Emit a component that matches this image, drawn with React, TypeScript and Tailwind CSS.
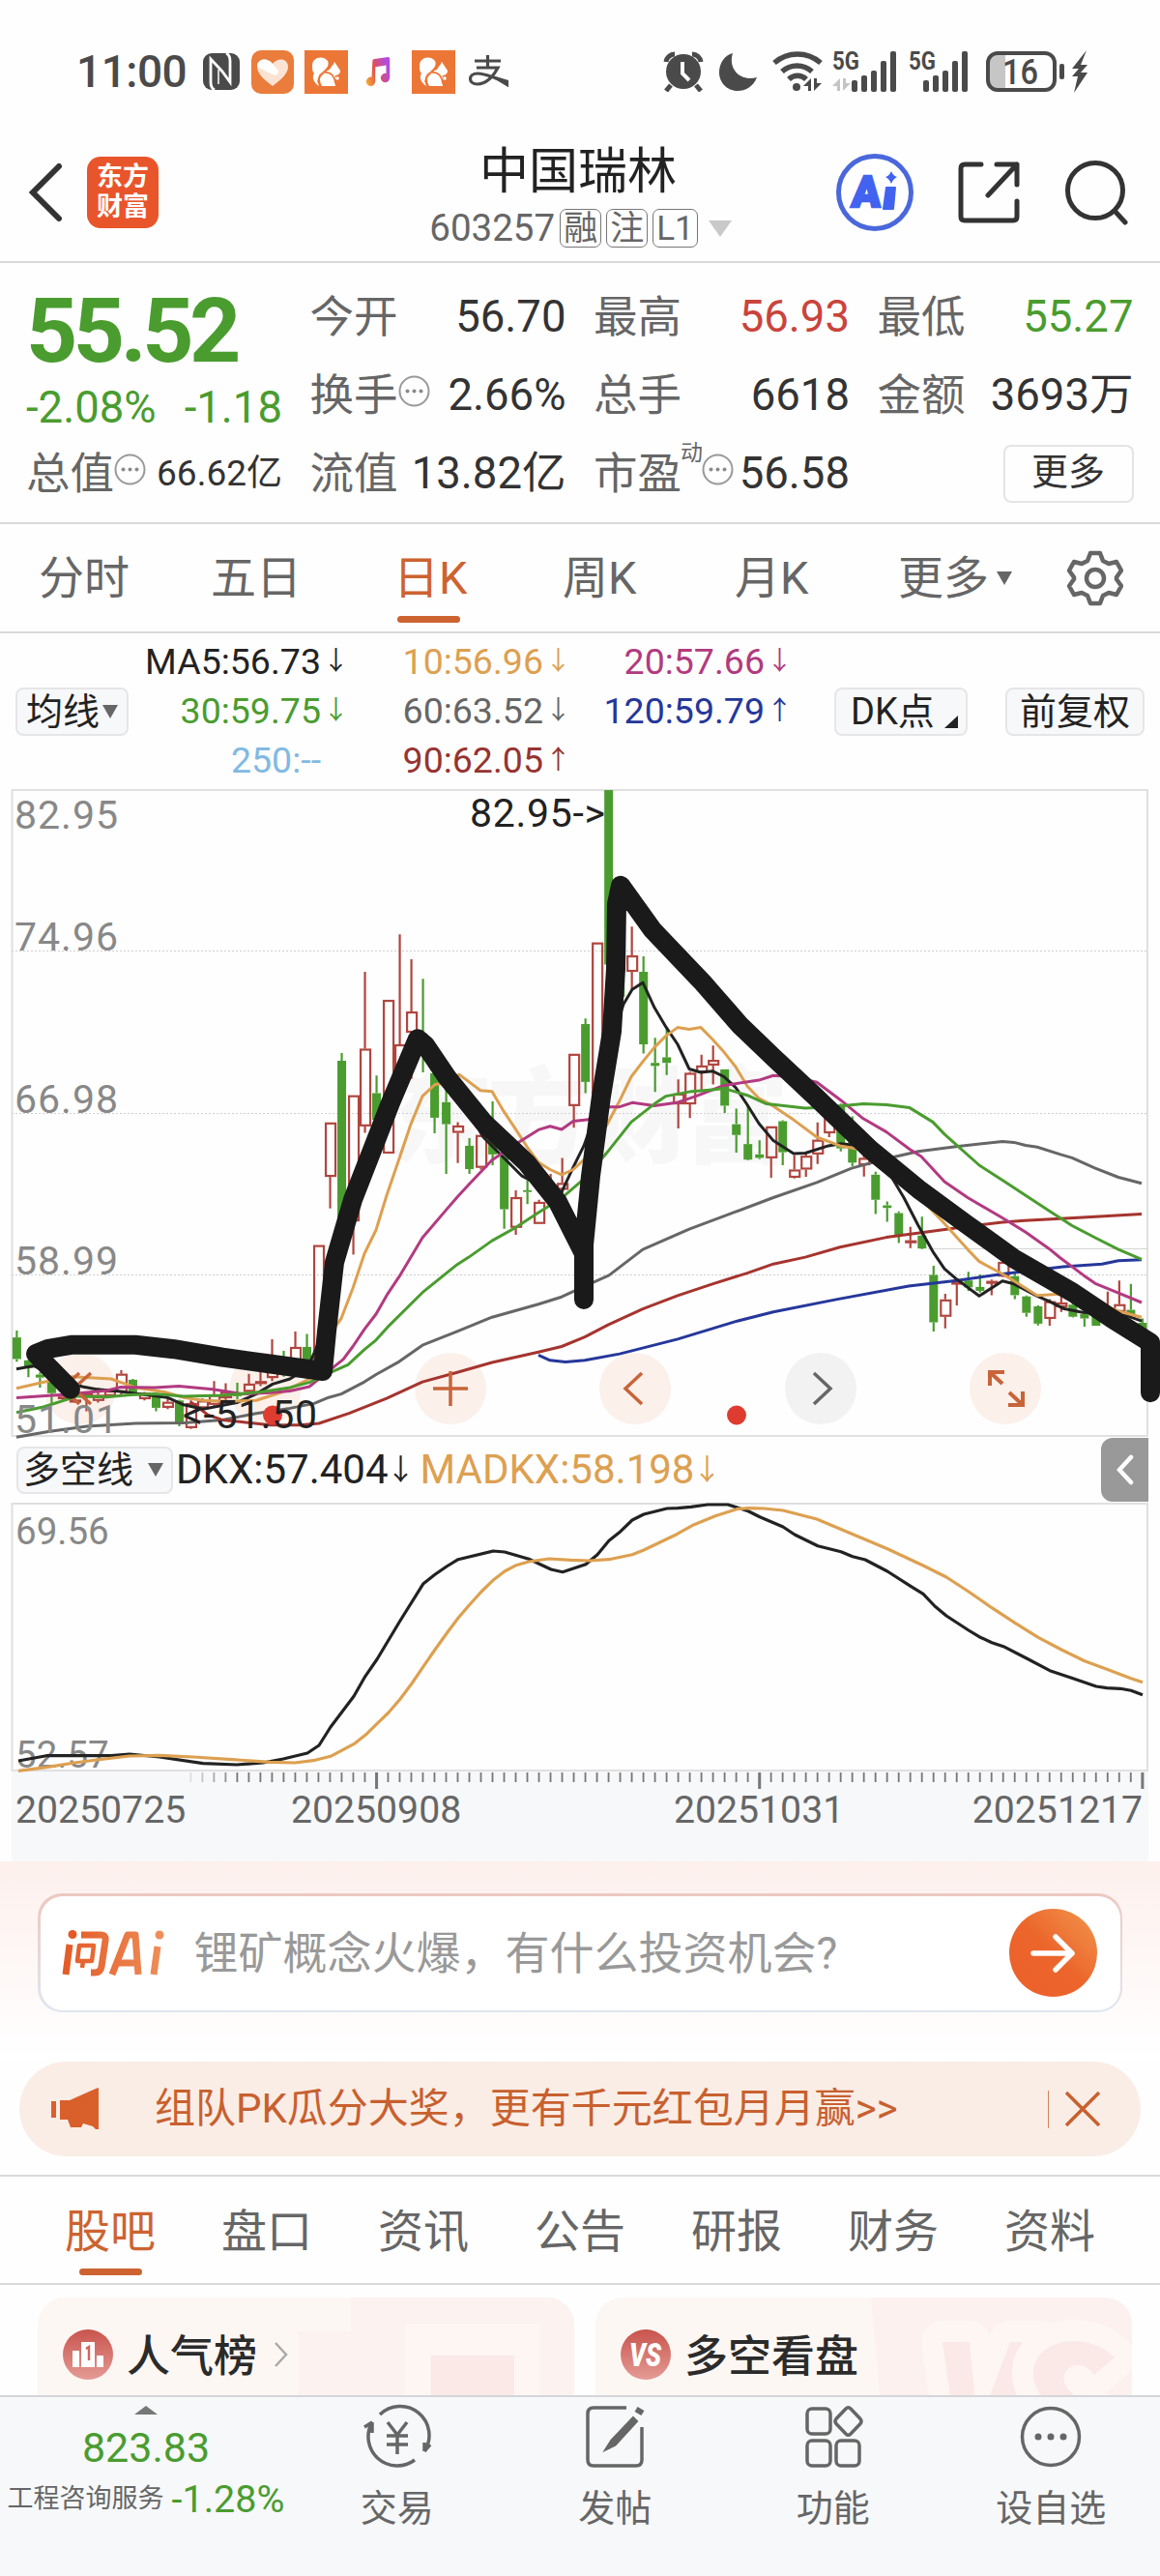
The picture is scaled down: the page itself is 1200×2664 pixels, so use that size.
import type { ReactNode } from 'react'

type Candle = [kind: 'up' | 'down', high: number, top: number, bottom: number, low: number]
type Point = [x: number, y: number]

const GREEN = '#4a9c2f'
const RED = '#b0463f'
const ORANGE = '#dda050'

// one entry per trading day, 12px apart
const candles: Candle[] = [
  ['down', 1288, 1304, 1354, 1360], ['down', 1355, 1357, 1375, 1396], ['down', 1385, 1390, 1397, 1420],
  ['down', 1400, 1405, 1433, 1457], ['up', 1430, 1437, 1447, 1450], ['up', 1445, 1448, 1452, 1455],
  ['up', 1430, 1432, 1440, 1475], ['up', 1420, 1437, 1451, 1455], ['up', 1425, 1427, 1440, 1442],
  ['up', 1380, 1388, 1431, 1436], ['down', 1400, 1402, 1431, 1431], ['up', 1430, 1432, 1447, 1450],
  ['down', 1437, 1438, 1467, 1475], ['up', 1445, 1453, 1467, 1470], ['down', 1448, 1450, 1502, 1510],
  ['up', 1450, 1456, 1514, 1516], ['up', 1445, 1450, 1468, 1470], ['up', 1405, 1437, 1460, 1465],
  ['up', 1410, 1430, 1445, 1455], ['down', 1409, 1435, 1440, 1447], ['up', 1388, 1411, 1430, 1435],
  ['up', 1375, 1405, 1412, 1417], ['up', 1308, 1370, 1398, 1405], ['down', 1335, 1380, 1390, 1395],
  ['up', 1290, 1326, 1360, 1370], ['down', 1296, 1326, 1360, 1370], ['up', 1090, 1090, 1370, 1380],
  ['up', 806, 806, 932, 1005], ['down', 645, 663, 1040, 1060], ['up', 743, 743, 1035, 1112],
  ['up', 457, 635, 815, 830], ['down', 697, 738, 800, 850], ['up', 522, 522, 878, 878],
  ['up', 370, 625, 690, 700], ['up', 428, 549, 598, 705], ['down', 473, 600, 650, 690],
  ['down', 690, 692, 795, 831], ['down', 730, 759, 810, 925], ['up', 805, 813, 830, 900],
  ['down', 842, 860, 914, 925], ['up', 835, 835, 911, 915], ['down', 757, 840, 880, 905],
  ['down', 825, 885, 1007, 1052], ['up', 963, 979, 1050, 1066], ['down', 940, 963, 967, 995],
  ['up', 985, 990, 1041, 1041], ['up', 925, 950, 962, 965], ['up', 888, 946, 962, 970],
  ['up', 647, 647, 768, 818], ['down', 565, 578, 712, 738], ['up', 389, 389, 740, 760],
  ['down', 36, 36, 440, 700], ['down', 473, 475, 515, 520], ['up', 352, 419, 457, 497],
  ['down', 421, 457, 625, 646], ['down', 610, 668, 675, 735], ['down', 588, 655, 668, 696],
  ['up', 706, 739, 764, 820], ['up', 688, 691, 764, 796], ['up', 649, 674, 690, 735],
  ['up', 628, 661, 674, 718], ['down', 683, 683, 767, 784], ['down', 774, 810, 835, 876],
  ['down', 765, 856, 892, 894], ['down', 847, 880, 888, 891], ['up', 815, 815, 889, 934],
  ['down', 801, 803, 875, 905], ['up', 882, 915, 934, 936], ['up', 878, 883, 915, 932],
  ['up', 806, 846, 880, 902], ['up', 780, 790, 831, 840], ['down', 762, 765, 866, 873],
  ['down', 792, 850, 899, 907], ['up', 875, 888, 905, 931], ['down', 920, 927, 985, 1018],
  ['down', 989, 998, 1004, 1036], ['down', 1012, 1016, 1068, 1085], ['up', 1048, 1079, 1084, 1097],
  ['down', 1024, 1068, 1098, 1100], ['down', 1138, 1159, 1269, 1290], ['up', 1203, 1216, 1256, 1283],
  ['up', 1175, 1175, 1181, 1230], ['down', 1152, 1172, 1188, 1196], ['down', 1158, 1187, 1196, 1200],
  ['up', 1170, 1173, 1178, 1206], ['up', 1125, 1129, 1163, 1165], ['down', 1155, 1162, 1206, 1215],
  ['down', 1207, 1209, 1247, 1256], ['down', 1230, 1232, 1272, 1276], ['up', 1215, 1220, 1261, 1277],
  ['up', 1205, 1223, 1234, 1245], ['down', 1220, 1228, 1256, 1258], ['down', 1240, 1250, 1260, 1279],
  ['down', 1245, 1255, 1277, 1277], ['up', 1198, 1245, 1265, 1268], ['up', 1172, 1227, 1245, 1250],
  ['down', 1180, 1240, 1250, 1260], ['down', 1260, 1270, 1290, 1290],
]

const averages: { color: string; points: Point[] }[] = [
  {
    color: '#666666',
    points: [[17, 1535], [50, 1522], [90, 1510], [140, 1503], [190, 1502], [230, 1495], [265, 1480], [300, 1468], [325, 1457], [340, 1443], [353, 1435], [377, 1407], [389, 1390], [413, 1360], [437, 1322], [473, 1290], [509, 1257], [557, 1227], [581, 1210], [600, 1190], [630, 1160], [665, 1100], [713, 1053], [761, 1013], [800, 980], [845, 945], [881, 912], [917, 890], [950, 873], [989, 862], [1037, 850], [1049, 852], [1061, 859], [1073, 863], [1097, 880], [1109, 888], [1133, 912], [1157, 933], [1181, 947]],
  },
  {
    color: '#a5342f',
    points: [[197, 1453], [215, 1483], [230, 1495], [250, 1500], [280, 1507], [310, 1507], [330, 1503], [361, 1480], [400, 1445], [437, 1407], [473, 1385], [509, 1362], [557, 1338], [581, 1325], [605, 1303], [629, 1275], [665, 1238], [701, 1207], [737, 1180], [773, 1155], [800, 1134], [833, 1118], [869, 1095], [917, 1072], [957, 1060], [1000, 1047], [1037, 1037], [1060, 1033], [1120, 1026], [1181, 1018]],
  },
  {
    color: '#25379b',
    points: [[557, 1345], [569, 1357], [585, 1361], [605, 1357], [641, 1342], [701, 1308], [761, 1267], [800, 1245], [865, 1216], [940, 1185], [990, 1172], [1037, 1157], [1100, 1140], [1140, 1134], [1157, 1126], [1181, 1124]],
  },
  {
    color: '#222222',
    points: [[17, 1377], [35, 1370], [60, 1395], [85, 1418], [100, 1424], [120, 1428], [173, 1443], [190, 1460], [210, 1470], [245, 1455], [265, 1435], [282, 1412], [300, 1400], [318, 1375], [327, 1330], [340, 1250], [352, 1120], [380, 920], [400, 780], [420, 640], [437, 610], [460, 690], [500, 840], [540, 930], [570, 965], [580, 972], [593, 910], [604, 860], [620, 760], [635, 600], [645, 532], [654, 498], [665, 482], [677, 540], [689, 585], [701, 625], [713, 682], [725, 690], [737, 687], [749, 700], [761, 725], [773, 765], [785, 808], [800, 848], [821, 878], [833, 877], [857, 860], [870, 855], [890, 860], [915, 905], [935, 980], [950, 1045], [965, 1105], [977, 1145], [989, 1168], [1013, 1208], [1037, 1173], [1049, 1180], [1073, 1208], [1085, 1220], [1100, 1237], [1120, 1246], [1140, 1248], [1165, 1253], [1181, 1266]],
  },
  {
    color: ORANGE,
    points: [[17, 1422], [50, 1405], [75, 1395], [115, 1400], [140, 1420], [170, 1430], [190, 1443], [210, 1450], [240, 1452], [265, 1450], [290, 1432], [320, 1400], [340, 1300], [353, 1260], [365, 1190], [377, 1110], [389, 1055], [400, 975], [413, 890], [425, 810], [437, 745], [450, 718], [462, 715], [475, 695], [483, 708], [497, 732], [509, 734], [521, 780], [533, 820], [545, 862], [557, 898], [569, 915], [581, 927], [593, 915], [605, 890], [627, 815], [640, 760], [653, 700], [665, 665], [677, 632], [689, 605], [701, 586], [713, 590], [725, 586], [737, 613], [749, 643], [761, 677], [773, 722], [785, 750], [800, 768], [821, 800], [845, 840], [869, 860], [889, 868], [930, 930], [977, 1040], [989, 1070], [1001, 1100], [1013, 1128], [1037, 1157], [1049, 1173], [1073, 1207], [1100, 1203], [1130, 1220], [1160, 1245], [1181, 1257]],
  },
  {
    color: '#b23a80',
    points: [[17, 1444], [70, 1436], [110, 1427], [125, 1419], [160, 1420], [185, 1417], [220, 1424], [250, 1435], [280, 1432], [300, 1428], [320, 1418], [345, 1373], [355, 1355], [365, 1325], [377, 1285], [389, 1250], [401, 1203], [413, 1163], [437, 1073], [461, 1010], [473, 979], [485, 950], [509, 893], [533, 857], [557, 823], [569, 815], [581, 822], [593, 803], [607, 800], [620, 790], [630, 770], [641, 770], [654, 760], [677, 767], [700, 760], [720, 745], [749, 720], [785, 708], [800, 697], [820, 700], [845, 713], [869, 753], [893, 797], [917, 828], [941, 868], [953, 885], [977, 943], [1001, 980], [1037, 1027], [1061, 1060], [1085, 1098], [1097, 1120], [1121, 1160], [1133, 1179], [1157, 1201], [1181, 1223]],
  },
  {
    color: GREEN,
    points: [[17, 1478], [45, 1465], [80, 1440], [110, 1442], [135, 1437], [160, 1435], [190, 1440], [230, 1438], [270, 1430], [300, 1420], [320, 1408], [343, 1384], [360, 1367], [377, 1332], [389, 1310], [401, 1280], [437, 1200], [473, 1135], [485, 1118], [509, 1080], [533, 1050], [557, 1015], [580, 983], [605, 935], [630, 870], [653, 805], [677, 763], [689, 745], [713, 735], [737, 730], [749, 727], [773, 743], [793, 763], [833, 773], [860, 770], [893, 763], [917, 765], [941, 772], [965, 805], [977, 833], [989, 857], [1013, 905], [1037, 940], [1061, 975], [1085, 1010], [1109, 1045], [1133, 1073], [1157, 1100], [1181, 1123]],
  },
]

// hand drawn marker over the K line
const marker: Point[] = [
  [73, 1424], [37, 1342], [50, 1330], [75, 1321], [140, 1321], [180, 1331], [230, 1350], [334, 1382], [338, 1290], [346, 1130],
  [365, 985], [385, 870], [404, 760], [432, 612], [440, 627], [463, 703], [500, 805], [545, 900], [577, 990], [604, 1110],
  [604, 1216], [604, 1090], [611, 930], [622, 745], [633, 595], [637, 450], [638, 300], [642, 257], [675, 360],
  [727, 482], [766, 582], [800, 655], [843, 745], [900, 868], [950, 960], [1000, 1042], [1050, 1123], [1110, 1200],
  [1150, 1260], [1190, 1316], [1190, 1432],
]

const dkx: Point[] = [[19, 1020], [48, 1004], [115, 1004], [134, 999], [165, 1008], [210, 1028], [245, 1032], [272, 1026], [293, 1014], [318, 996], [330, 972], [342, 915], [366, 820], [378, 757], [390, 705], [402, 645], [414, 585], [438, 470], [450, 442], [462, 417], [474, 395], [510, 369], [522, 372], [547, 394], [570, 426], [582, 434], [600, 416], [606, 410], [618, 380], [630, 337], [642, 308], [654, 273], [666, 255], [690, 237], [701, 236], [715, 232], [732, 225], [753, 225], [774, 245], [786, 263], [810, 294], [822, 318], [846, 353], [870, 371], [882, 386], [895, 396], [918, 432], [942, 478], [955, 502], [967, 540], [979, 570], [1002, 615], [1013, 635], [1026, 653], [1038, 665], [1062, 702], [1086, 740], [1110, 764], [1134, 789], [1145, 794], [1159, 796], [1170, 802], [1182, 815]]
const madkx: Point[] = [[19, 1051], [48, 1040], [77, 1026], [100, 1017], [134, 1005], [165, 1003], [200, 1008], [240, 1016], [280, 1024], [305, 1026], [326, 1018], [342, 1006], [366, 968], [378, 940], [390, 905], [402, 870], [414, 828], [426, 780], [438, 727], [450, 675], [462, 625], [474, 577], [486, 535], [498, 495], [510, 460], [522, 432], [534, 413], [547, 402], [568, 393], [590, 397], [610, 399], [630, 395], [654, 380], [666, 366], [700, 317], [718, 287], [740, 260], [762, 239], [775, 236], [790, 237], [810, 243], [845, 270], [918, 362], [955, 414], [979, 450], [1002, 495], [1026, 545], [1050, 592], [1074, 637], [1098, 675], [1122, 710], [1145, 736], [1170, 764], [1182, 776]]

const ky = (v: number) => v / 2.24 - 15
const dy = (v: number) => v / 3 - 73
const line = (pts: Point[], fn: (v: number) => number) => pts.map(([x, y]) => `${x},${fn(y).toFixed(1)}`).join(' ')

function Squirrel({ className }: { className: string }) {
  return (
    <svg className={className} width="45" height="45" viewBox="0 0 45 45">
      <rect width="45" height="45" fill="#ec7635" />
      <path d="M8 16C8 7 19 5 24 11c2 4-1 8-5 11-4 2-7 8-4 15-5-3-8-9-5-13-2-2-2-5-2-8z" fill="#fff" />
      <path d="M20 25c6-3 8-9 11-13l6 9c0 4-3 5-6 5-3-2-7-3-11-1z" fill="#fff" />
      <path d="M16 30a8 8 0 1 1 15 2l1 5H18q-2-3-2-7z" fill="#fff" />
      <path d="M14 33C15 24 22 23 30 13" stroke="#ec7635" strokeWidth="1.800" fill="none" />
      <path d="M21 23q9-1 11 11" stroke="#ec7635" strokeWidth="1.600" fill="none" />
      <circle cx="34" cy="29" r="1.800" fill="#fff" />
    </svg>
  )
}

function Signal({ label, roaming }: { label: string; roaming?: boolean }) {
  return (
    <svg className="overflow-visible" width="68" height="44" viewBox="0 0 68 44" fill="#4a4a4a">
      <text x="0" y="20" fontSize="26" fontWeight="700" textLength="28" lengthAdjust="spacingAndGlyphs">{label}</text>
      {roaming && <path d="M8 42V29l-8 8h5v5zM11 29v13l8-8h-5v-5z" fill="#c4c4c4" />}
      {[31, 26, 21, 11, 1].map((y, i) => (
        <rect key={y} x={(roaming ? 20 : 15) + i * 10} y={y} width="6" height={43 - y} rx="2" />
      ))}
    </svg>
  )
}

function StatusBar() {
  return (
    <div className="h-[134px] pt-[14px] pl-[79px] pr-[74px] flex items-center text-[#4a4a4a]">
      <span className="w-[131px] text-[46px] font-medium tracking-[-0.5px]">11:00</span>
      <svg width="38" height="38" viewBox="0 0 38 38">
        <rect width="38" height="38" rx="9" fill="#4a4a4a" />
        <path d="M12 38q-4-2-4-8V6l12 13 8 11V8q0-6-4-8" stroke="#fff" strokeWidth="2.800" fill="none" />
        <path d="M16 17v15" stroke="#fff" strokeWidth="1.500" fill="none" />
      </svg>
      <svg className="ml-[12px]" width="44" height="45" viewBox="0 0 44 45">
        <rect width="44" height="45" rx="10" fill="#ea7c3c" />
        <path d="M22 37C11 29 6 23 6 17c0-9 11-10 16-3 5-7 16-6 16 3 0 6-5 12-16 20z" fill="#fbe3d3" />
        <path d="M6 17c0-9 11-10 16-3l5 6c3 4-2 7-5 5z" fill="#fff" />
      </svg>
      <Squirrel className="ml-[11px]" />
      <svg className="ml-[18px]" width="27" height="30" viewBox="0 0 27 32">
        <defs>
          <linearGradient id="note" x1="0" y1="1" x2="1" y2="0.6">
            <stop offset="0" stopColor="#f5b331" />
            <stop offset="0.5" stopColor="#e3514e" />
            <stop offset="1" stopColor="#b34be0" />
          </linearGradient>
        </defs>
        <path d="M7 4q0-2 2-2l15-2q2 0 2 2v21a5 5 0 1 1-4-5V9L10 11v16a5 5 0 1 1-4-5z" fill="url(#note)" />
      </svg>
      <Squirrel className="ml-[21px]" />
      <svg className="ml-[14px]" width="41" height="34" viewBox="0 0 41 34" fill="none" stroke="#4a4a4a" strokeWidth="3.200">
        <path d="M6 6h27M19.500 0v12M8 13h22c-5 10-13 17-21 17-10 0-10-11 0-11 8 0 16 4 24 7" />
        <path d="M24 22l17 5v5z" fill="#4a4a4a" strokeWidth="2" />
      </svg>
      <div className="ml-auto flex items-center">
        <svg width="42" height="42" viewBox="0 0 42 42">
          <circle cx="21" cy="21" r="18" fill="#4a4a4a" />
          <path d="M3 11a9 9 0 0 1 9-8M39 11a9 9 0 0 0-9-8M8 35l-5 6M34 35l5 6" stroke="#4a4a4a" strokeWidth="5" fill="none" />
          <path d="M20 11v12l7 7" stroke="#fff" strokeWidth="4" fill="none" />
        </svg>
        <svg className="ml-[16px]" width="40" height="40" viewBox="0 0 40 40">
          <path d="M14 1C9 15 20 31 39 26 35 36 27 40 19 40 8 40 0 31 0 21 0 11 6 3 14 1z" fill="#4a4a4a" />
        </svg>
        <svg className="ml-[15px]" width="52" height="42" viewBox="0 0 52 42" fill="none" stroke="#4a4a4a" strokeWidth="5.500">
          <path d="M2 12C16 0 36 0 50 12M10 21c9-8 22-8 31 0M17 29c5-5 13-5 18 0" />
          <circle cx="25" cy="37" r="4" fill="#4a4a4a" stroke="none" />
          <path d="M40 41V28l-8 8h5v5zM43 28v13l8-8h-5v-5z" fill="#4a4a4a" stroke="none" />
        </svg>
        <div className="ml-[10px] flex gap-[11px]">
          <Signal label="5G" roaming />
          <Signal label="5G" />
        </div>
        <svg className="ml-[12px] overflow-visible" width="83" height="42" viewBox="0 0 83 42">
          <path d="M3 12q0-10 10-10h7v38h-7Q3 40 3 30z" fill="#c6c6c6" />
          <rect x="2" y="2" width="69" height="38" rx="10" fill="none" stroke="#4a4a4a" strokeWidth="4" />
          <rect x="76" y="13" width="5" height="16" rx="2" fill="#4a4a4a" />
          <text x="17" y="34" fontSize="36" fontWeight="500" fill="#4a4a4a" textLength="37" lengthAdjust="spacingAndGlyphs">16</text>
        </svg>
        <svg className="ml-[6px]" width="17" height="44" viewBox="0 0 17 44">
          <path d="M15 0L0 19h7L0 27h6L2 44l14-21H9l7-8H9z" fill="#4a4a4a" />
        </svg>
      </div>
    </div>
  )
}

function Tag({ children }: { children: ReactNode }) {
  return <span className="h-[40px] min-w-[41px] px-[3px] flex items-center justify-center rounded-[7px] border border-[#777] text-[35px] leading-none">{children}</span>
}

function Header() {
  return (
    <header className="h-[138px] flex border-b-2 border-[#d9d9d9]">
      <div className="w-[400px] pl-[29px] pt-[28px] flex">
        <svg className="mt-[7px]" width="36" height="60" viewBox="0 0 36 60" fill="none" stroke="#333" strokeWidth="6">
          <path d="M32 3L5 30l27 27" strokeLinecap="round" />
        </svg>
        <div className="ml-[25px] w-[74px] h-[74px] rounded-[14px] bg-[#e9552b] text-white font-bold text-[27px] leading-[31px] text-center pt-[6px]">
          东方<br />财富
        </div>
      </div>
      <div className="w-[396px] flex flex-col items-center">
        <h1 className="mt-[18px] text-[51px] leading-none text-[#222]">中国瑞林</h1>
        <div className="mt-[13px] ml-[5px] flex items-center gap-[5px] text-[#666] text-[38.500px] leading-none">
          <span>603257</span>
          <Tag>融</Tag>
          <Tag>注</Tag>
          <Tag>L1</Tag>
          <svg className="ml-[6px]" width="24" height="17" viewBox="0 0 24 17"><path d="M0 0h24L12 17z" fill="#c9c9c9" /></svg>
        </div>
      </div>
      <div className="ml-auto w-[400px] pr-[33px] pt-[25px] flex justify-end gap-[46px]">
        <svg className="overflow-visible" width="80" height="80" viewBox="0 0 80 80">
          <circle cx="40" cy="40" r="37.500" fill="#fff" stroke="#4a68dc" strokeWidth="5" />
          <text x="19" y="55" fontSize="45" fontWeight="900" fill="#4163f0" stroke="#4163f0" strokeWidth="2.500" transform="skewX(-4)" textLength="30" lengthAdjust="spacingAndGlyphs">A</text>
          <path d="M52 35h9l-2 22h-10z" fill="#4163f0" stroke="#4163f0" strokeWidth="2" strokeLinejoin="round" />
          <path d="M57 18q2 5 6 6-4 2-6 7-2-5-6-7 4-1 6-6z" fill="#4163f0" />
        </svg>
        <svg className="mt-[8px]" width="64" height="64" viewBox="0 0 64 64" fill="none" stroke="#333" strokeWidth="5" strokeLinecap="round" strokeLinejoin="round">
          <path d="M24 3H7q-4 0-4 4v50q0 4 4 4h50q4 0 4-4V41M40 3h21v21M61 3L31 35" />
        </svg>
        <svg className="mt-[6px]" width="66" height="68" viewBox="0 0 66 68" fill="none" stroke="#333" strokeWidth="5" strokeLinecap="round">
          <circle cx="32" cy="32" r="28.500" />
          <path d="M52 53l11 12" />
        </svg>
      </div>
    </header>
  )
}

function Dots() {
  return (
    <svg width="33" height="33" viewBox="0 0 33 33" fill="#8a8a8a">
      <circle cx="16.500" cy="16.500" r="15" fill="none" stroke="#999" strokeWidth="2" />
      <circle cx="9.500" cy="16.500" r="2" /><circle cx="16.500" cy="16.500" r="2" /><circle cx="23.500" cy="16.500" r="2" />
    </svg>
  )
}

function Stat({ label, value, tip, sup, className = 'text-[#333]' }: { label: string; value: string; tip?: boolean; sup?: string; className?: string }) {
  return (
    <div className="h-[81px] flex items-center text-[45.500px] whitespace-nowrap">
      <span className="text-[#666] pt-[3px]">{label}</span>
      {sup && <span className="text-[#666] text-[23px] -mt-[42px] -mx-[1px]">{sup}</span>}
      {tip && <span className="-mt-[8px]"><Dots /></span>}
      <span className={`ml-auto ${className}`}>{value}</span>
    </div>
  )
}

function Quote() {
  return (
    <section className="h-[270px] pt-[15px] px-[27px] grid grid-cols-[265px_265px_265px_265px] gap-x-[28.500px] border-b-2 border-[#d9d9d9] leading-none">
      <div>
        <div className="h-[106px] pt-[9px] text-[93px] font-bold text-[#4a9c2f] tracking-[-4.500px]">55.52</div>
        <div className="h-[56px] pt-[6px] flex justify-between text-[45.500px] text-[#4a9c2f]">
          <span>-2.08%</span>
          <span>-1.18</span>
        </div>
        <Stat label="总值" value="66.62亿" tip className="text-[37px] text-[#333]" />
      </div>
      <div>
        <Stat label="今开" value="56.70" />
        <Stat label="换手" value="2.66%" tip />
        <Stat label="流值" value="13.82亿" />
      </div>
      <div>
        <Stat label="最高" value="56.93" className="text-[#c9443c]" />
        <Stat label="总手" value="6618" />
        <Stat label="市盈" sup="动" value="56.58" tip />
      </div>
      <div>
        <Stat label="最低" value="55.27" className="text-[#4a9c2f]" />
        <Stat label="金额" value="3693万" />
        <div className="h-[81px] flex items-center justify-end">
          <button className="w-[135px] h-[60px] pb-[3px] rounded-lg border-2 border-[#e4e4e4] text-[38px] leading-none text-[#333]">更多</button>
        </div>
      </div>
    </section>
  )
}

function PeriodTabs() {
  return (
    <nav className="h-[113px] pl-[40px] pr-[38px] flex items-center border-b-2 border-[#d9d9d9] text-[47px] leading-none text-[#666]">
      <span className="w-[178px]">分时</span>
      <span className="w-[189px]">五日</span>
      <span className="w-[175px] h-full relative flex items-center text-[#cd6330]">
        日K
        <i className="absolute left-[4px] bottom-[9px] w-[65px] h-[7px] rounded-full bg-[#cd6330]" />
      </span>
      <span className="w-[178px]">周K</span>
      <span className="w-[169px]">月K</span>
      <span>更多</span>
      <svg className="ml-[8px]" width="16" height="14" viewBox="0 0 16 14"><path d="M0 0h16L8 14z" fill="#666" /></svg>
      <svg className="ml-auto" width="58" height="58" viewBox="0 0 58 58" fill="none" stroke="#666" strokeWidth="4.500" strokeLinejoin="round">
        <path d="M24 3h10l3 8 6 3 8-2 5 9-5 7v2l5 7-5 9-8-2-6 3-3 8H24l-3-8-6-3-8 2-5-9 5-7v-2l-5-7 5-9 8 2 6-3z" />
        <circle cx="29" cy="29" r="9" />
      </svg>
    </nav>
  )
}

function Ma({ text, arrow, className }: { text: string; arrow?: 'up' | 'down'; className: string }) {
  return (
    <div className={`flex items-center justify-end ${className}`}>
      <span>{text}</span>
      <span className="w-[27px] pl-[2px] text-[27px] leading-none">{arrow === 'up' ? '↑' : arrow === 'down' ? '↓' : ''}</span>
    </div>
  )
}

function MaLegend() {
  return (
    <section className="h-[161px] px-[16px] flex items-center text-[37.500px] leading-none">
      <button className="w-[117px] h-[50px] flex items-center justify-center gap-[3px] rounded-lg border-2 border-[#e6e6e8] bg-[#f7f8fa] text-[38px] leading-none text-[#222]">
        均线
        <svg width="16" height="14" viewBox="0 0 16 14"><path d="M0 0h16L8 14z" fill="#666" /></svg>
      </button>
      <div className="h-full pt-[4px] grid grid-cols-[226px_230px_229px] grid-rows-[51px_51px_51px]">
        <Ma className="text-[#222]" text="MA5:56.73" arrow="down" />
        <Ma className="text-[#dda050]" text="10:56.96" arrow="down" />
        <Ma className="text-[#b23a80]" text="20:57.66" arrow="down" />
        <Ma className="text-[#4a9c2f]" text="30:59.75" arrow="down" />
        <Ma className="text-[#666]" text="60:63.52" arrow="down" />
        <Ma className="text-[#25379b]" text="120:59.79" arrow="up" />
        <Ma className="text-[#82b9e2]" text="250:--" />
        <Ma className="text-[#963431]" text="90:62.05" arrow="up" />
      </div>
      <button className="ml-auto w-[138px] h-[50px] pl-[15px] flex items-center rounded-lg border-2 border-[#e6e6e8] bg-[#f7f8fa] text-[38px] leading-none text-[#222]">
        DK点
        <svg className="ml-[10px] mt-[22px]" width="14" height="13" viewBox="0 0 14 13"><path d="M14 0v13H0z" fill="#222" /></svg>
      </button>
      <button className="ml-[39px] w-[144px] h-[50px] rounded-lg border-2 border-[#e6e6e8] bg-[#f7f8fa] text-[38px] leading-none text-[#222]">前复权</button>
    </section>
  )
}

function KChart() {
  return (
    <svg className="block overflow-visible" width="1200" height="670" viewBox="0 0 1200 670" fill="none">
      <text x="402" y="378" fontSize="108" fontWeight="900" fill="#f7f7f7" letterSpacing="-6">东方财富</text>
      <rect x="12.500" y="1" width="1174.500" height="668" stroke="#e0e0e0" strokeWidth="2" />
      {[168, 336, 503].map(y => (
        <path key={y} d={`M12 ${y - 0.5}H1187`} stroke="#cfcfcf" strokeWidth="1" strokeDasharray="2 2" />
      ))}
      <path d="M960 475.500H1187" stroke="#d5d5d5" />
      {[83, 274.500, 466, 657, 849, 1040].map(x => (
        <circle key={x} cx={x} cy="620" r="37" fill={x === 849 ? '#f2f2f2' : '#fbf0ea'} />
      ))}
      {candles.map(([kind, high, top, bottom, low], i) => {
        const x = 17.4 + i * 12.005
        const t = ky(top)
        const h = Math.max(ky(bottom) - t, 1)
        const color = kind === 'up' ? RED : GREEN
        return (
          <g key={i} stroke={color} strokeWidth="2.200">
            <path d={`M${x} ${ky(high)}V${t}M${x} ${t + h}V${ky(low)}`} />
            {kind === 'up'
              ? <rect x={x - 4.5} y={t + 1} width="10" height={Math.max(h - 2, 1)} />
              : <rect x={x - 4.5} y={t} width="9" height={h} fill={color} stroke="none" />}
          </g>
        )
      })}
      {averages.map(a => (
        <polyline key={a.color} points={line(a.points, ky)} stroke={a.color} strokeWidth="3" strokeLinejoin="round" />
      ))}
      <g stroke="#c8643a" strokeWidth="3.500">
        <path d="M82 604L64 620l18 16M94 604L76 620l18 16" />
        <path d="M448 620h36M466 602v36" />
        <path d="M664 604L647 620l17 16" />
        <path d="M842 604l17 16-17 16" stroke="#666" />
        <path d="M1024 617v-14h15M1024 603l13 12M1058 623v14h-15M1058 637l-14-13" strokeWidth="4" />
      </g>
      <circle cx="282" cy="647.500" r="10" fill="#de3c30" />
      <circle cx="762" cy="647.500" r="10" fill="#de3c30" />
      <g fontSize="41" fill="#888">
        <text x="15" y="41" textLength="107">82.95</text>
        <text x="15" y="167" textLength="107">74.96</text>
        <text x="15" y="335" textLength="107">66.98</text>
        <text x="15" y="502" textLength="107">58.99</text>
        <text x="15" y="666" textLength="107">51.01</text>
      </g>
      <g fontSize="41" fill="#222">
        <text x="486" y="39" textLength="140">82.95-&gt;</text>
        <text x="189" y="661" textLength="139">&lt;-51.50</text>
      </g>
      <polyline points={line(marker, ky)} stroke="#1a1a1a" strokeWidth="20" strokeLinecap="round" strokeLinejoin="round" />
    </svg>
  )
}

function IndicatorBar() {
  return (
    <div className="h-[68px] pl-[17px] pr-[12px] flex items-center text-[42px] leading-none">
      <button className="w-[162px] h-[49px] flex items-center gap-[15px] pl-[5px] rounded-lg border-2 border-[#e6e6e8] bg-[#f7f8fa] text-[38px] leading-none text-[#222]">
        多空线
        <svg width="16" height="14" viewBox="0 0 16 14"><path d="M0 0h16L8 14z" fill="#666" /></svg>
      </button>
      <span className="ml-[3px] text-[#222]">DKX:57.404</span>
      <span className="-ml-[2px] w-[35px] text-[30px] text-[#222]">↓</span>
      <span className="text-[#dda050]">MADKX:58.198</span>
      <span className="-ml-[2px] text-[30px] text-[#dda050]">↓</span>
      <div className="ml-auto w-[49px] h-[66px] flex items-center justify-center rounded-l-[12px] bg-[#999]">
        <svg width="18" height="32" viewBox="0 0 18 32" fill="none" stroke="#fff" strokeWidth="4.500" strokeLinecap="round"><path d="M15 3L3 16l12 13" /></svg>
      </div>
    </div>
  )
}

function DkChart() {
  return (
    <svg className="block overflow-visible" width="1200" height="278" viewBox="0 0 1200 278" fill="none">
      <rect x="12.500" y="1" width="1174.500" height="276" stroke="#e0e0e0" strokeWidth="2" />
      <g fontSize="38.500" fill="#888">
        <text x="16" y="43">69.56</text>
        <text x="16" y="274">52.57</text>
      </g>
      <polyline points={line(dkx, dy)} stroke="#222" strokeWidth="3.200" strokeLinejoin="round" />
      <polyline points={line(madkx, dy)} stroke={ORANGE} strokeWidth="3.200" strokeLinejoin="round" />
    </svg>
  )
}

function DateAxis() {
  return (
    <div className="mx-[12px] h-[93px] bg-[#f7f8fa] text-[39.200px] leading-none text-[#666]">
      <svg className="block" width="1176" height="20" viewBox="12 0 1176 20">
        {Array.from({ length: 83 }, (_, i) => {
          const n = i + 15
          const major = n === 31 || n === 64 || n === 97
          return <rect key={n} x={17.4 + n * 12.005 - (major ? 1.5 : 1)} y="1" width={major ? 3 : 1.8} height={major ? 17 : 10} fill="#777" opacity={Math.min(1, (i + 1) / 5)} />
        })}
      </svg>
      <div className="pl-[4px] pr-[6px] pt-px flex">
        <span className="w-[285px]">20250725</span>
        <span className="w-[396px]">20250908</span>
        <span>20251031</span>
        <span className="ml-auto">20251217</span>
      </div>
    </div>
  )
}

function AskAi() {
  return (
    <section className="h-[207px] pt-[33px] px-[39px] bg-linear-to-b from-[#fdf0ed] to-white">
      <div className="h-[123px] rounded-[25px] p-[2.500px] bg-linear-to-b from-[#ecc8c0] to-[#dfe6f0]">
        <div className="h-full rounded-[23px] bg-white flex items-center pl-[22px] pr-[24px]">
          <svg width="108" height="50" viewBox="0 0 108 50">
            <defs>
              <linearGradient id="ask" x1="0" x2="108" gradientUnits="userSpaceOnUse"><stop stopColor="#e35a26" /><stop offset="1" stopColor="#ee8f5a" /></linearGradient>
            </defs>
            <g fill="none" stroke="url(#ask)" strokeWidth="7" strokeLinejoin="round">
              <path d="M8 16L4 47M20 6h20q6 0 5 6l-4 27q-1 6-7 6h-4" />
              <path d="M18 17h15l-2 16H16zM22 33l-1 7" strokeWidth="4.500" />
              <path d="M52 47L68 6h8l3 41M59 35h19" />
              <path d="M99 18l-4 29" />
            </g>
            <circle cx="11" cy="5.500" r="4.500" fill="#e35a26" />
            <circle cx="101" cy="6" r="4.500" fill="#ee8f5a" />
          </svg>
          <span className="ml-[29px] text-[46px] leading-none text-[#999] whitespace-nowrap">锂矿概念火爆，有什么投资机会?</span>
          <div className="ml-auto w-[91px] h-[91px] rounded-full flex items-center justify-center bg-linear-to-bl from-[#f0964d] via-[#ec662c] to-[#ec5f2a]">
            <svg width="46" height="40" viewBox="0 0 46 40" fill="none" stroke="#fff" strokeWidth="5.500" strokeLinecap="round" strokeLinejoin="round"><path d="M3 20h40M26 3l17 17-17 17" /></svg>
          </div>
        </div>
      </div>
    </section>
  )
}

function Banner() {
  return (
    <section className="mx-[20px] h-[98px] pl-[33px] pr-[42px] rounded-[49px] bg-[#faede6] flex items-center text-[#c8602f]">
      <svg width="50" height="44" viewBox="0 0 50 44" fill="#d9602b">
        <path d="M0 14h5v17H0zM9 13h10L46 1l3-1v43h-3l-3-3-10-3-2 4H20l-3-8H9z" />
      </svg>
      <span className="ml-[57px] text-[42px] leading-none whitespace-nowrap">组队PK瓜分大奖，更有千元红包月月赢&gt;&gt;</span>
      <i className="ml-auto w-[1.500px] h-[39px] bg-[#d0835c]" />
      <svg className="ml-[17px]" width="36" height="36" viewBox="0 0 36 36" fill="none" stroke="#c8602f" strokeWidth="3.500"><path d="M1 1l34 34M35 1L1 35" /></svg>
    </section>
  )
}

const tabs = ['股吧', '盘口', '资讯', '公告', '研报', '财务', '资料']

function InfoTabs() {
  return (
    <nav className="mt-[19px] h-[114px] px-[33px] grid grid-cols-7 border-y-2 border-[#d9d9d9] text-[47px] leading-none text-[#666]">
      {tabs.map((t, i) => (
        <span key={t} className={`relative flex items-center justify-center pt-[2px] ${i === 0 ? 'text-[#cd6330]' : ''}`}>
          {t}
          {i === 0 && <i className="absolute bottom-[8px] w-[65px] h-[7px] rounded-full bg-[#cd6330]" />}
        </span>
      ))}
    </nav>
  )
}

function Cards() {
  return (
    <section className="h-[114px] pt-[13px] pl-[39px] pr-[29px] grid grid-cols-2 gap-[22px] overflow-hidden text-[45px] font-medium leading-none text-[#2b2b2b]">
      <div className="relative h-[140px] rounded-[28px] overflow-hidden bg-[#fdf7f4] pl-[26px] pt-[33px] flex items-start">
        <svg className="absolute right-0 top-0" width="290" height="110" viewBox="0 0 290 110">
          <path d="M59 0h231v110H4V35h55z" fill="#fcf2ef" />
          <path d="M115 27h140v83H115z" fill="#fdf6f3" />
          <path d="M142 60h86v50h-86z" fill="#fae9e6" />
        </svg>
        <svg className="relative" width="52" height="52" viewBox="0 0 52 52">
          <defs><linearGradient id="badge" x1="0" y1="0" x2="0" y2="1"><stop stopColor="#c8544d" /><stop offset="1" stopColor="#e59b95" /></linearGradient></defs>
          <circle cx="26" cy="26" r="26" fill="url(#badge)" />
          <path d="M10 22h7v17h-7zM19 13h14v26H19zM35 27h7v12h-7z" fill="#fff" />
          <path d="M24 20l3-2v14" stroke="#d0675f" strokeWidth="2.500" fill="none" />
        </svg>
        <span className="relative ml-[14px] mt-[6px]">人气榜</span>
        <svg className="relative ml-[17px] mt-[13px]" width="15" height="26" viewBox="0 0 15 26" fill="none" stroke="#aaa" strokeWidth="2.500"><path d="M2 1l11 12L2 25" /></svg>
      </div>
      <div className="relative h-[140px] rounded-[28px] overflow-hidden bg-[#fdf7f4] pl-[26px] pt-[33px] flex items-start">
        <svg className="absolute right-0 top-0" width="290" height="110" viewBox="0 0 290 110">
          <path d="M20 0h270v110H30z" fill="#fcf1ef" />
          <g stroke="#fdf6f3" strokeWidth="44" strokeLinejoin="round" fill="#fae9e6" paintOrder="stroke">
            <path d="M94 46h28l6 64h12l24-64h32l-34 84H106z" />
            <path d="M272 62c-30-30-84-18-84 16 0 20 14 30 26 40h40c-30-18-42-32-30-44 8-8 20-4 27 6z" />
          </g>
        </svg>
        <svg className="relative" width="52" height="52" viewBox="0 0 52 52">
          <circle cx="26" cy="26" r="26" fill="url(#badge)" />
          <text x="9" y="38" fontSize="34" fontWeight="900" fontStyle="italic" fill="#fff" textLength="33" lengthAdjust="spacingAndGlyphs">VS</text>
        </svg>
        <span className="relative ml-[14px] mt-[6px]">多空看盘</span>
      </div>
    </section>
  )
}

function NavItem({ label, children }: { label: string; children: ReactNode }) {
  return (
    <div className="w-[225.500px] flex flex-col items-center text-[38px] leading-none text-[#666]">
      <svg className="mt-[7px]" width="72" height="68" viewBox="0 0 72 68" fill="none" stroke="#666" strokeWidth="3.500">{children}</svg>
      <span className="mt-[21px]">{label}</span>
    </div>
  )
}

function BottomBar() {
  return (
    <footer className="h-[187px] flex bg-[#f6f8fa] border-t-2 border-[#d4d6da]">
      <div className="w-[298px] pl-[4px] flex flex-col items-center leading-none text-[#4a9c2f]">
        <svg className="mt-[9px]" width="24" height="9" viewBox="0 0 24 9"><path d="M12 0l12 9H0z" fill="#777" /></svg>
        <span className="mt-[13px] text-[43px]">823.83</span>
        <div className="mt-[12px] flex items-center gap-[8px] text-[39.500px] whitespace-nowrap">
          <span className="text-[27px] text-[#666]">工程咨询服务</span>
          <span>-1.28%</span>
        </div>
      </div>
      <NavItem label="交易">
        <path d="M18 11a30 30 0 0 1 46 38l6-7M64 49v-9M54 58A30 30 0 0 1 10 19l-8 5M10 19v11" />
        <path d="M26 19l10 13 10-13M25 33h22M25 42h22M36 32v20" />
      </NavItem>
      <NavItem label="发帖">
        <path d="M48 4H14q-6 0-6 6v48q0 6 6 6h44q6 0 6-6V24" />
        <path d="M55 15L33 38l-5 8 8-4 22-24z" fill="#666" />
        <path d="M60 10l3-5" strokeWidth="8" />
      </NavItem>
      <NavItem label="功能">
        <rect x="9" y="5" width="24" height="26" rx="5" />
        <rect x="9" y="38" width="24" height="26" rx="5" />
        <rect x="39" y="38" width="24" height="26" rx="5" />
        <path d="M49 5q2.500-2.500 5 0l10 10.500q2 2.500 0 5L54 31q-2.500 2.500-5 0L39 20.500q-2-2.500 0-5z" />
      </NavItem>
      <NavItem label="设自选">
        <circle cx="36" cy="34" r="29.500" />
        <g fill="#666" stroke="none"><circle cx="23" cy="34" r="3.500" /><circle cx="36" cy="34" r="3.500" /><circle cx="49" cy="34" r="3.500" /></g>
      </NavItem>
    </footer>
  )
}

export default function App() {
  return (
    <div className="w-[1200px] h-[2664px] overflow-hidden bg-[#fefefe] font-['Roboto','Noto_Sans_CJK_SC',sans-serif]">
      <StatusBar />
      <Header />
      <Quote />
      <PeriodTabs />
      <MaLegend />
      <KChart />
      <IndicatorBar />
      <DkChart />
      <DateAxis />
      <AskAi />
      <Banner />
      <InfoTabs />
      <Cards />
      <BottomBar />
    </div>
  )
}
